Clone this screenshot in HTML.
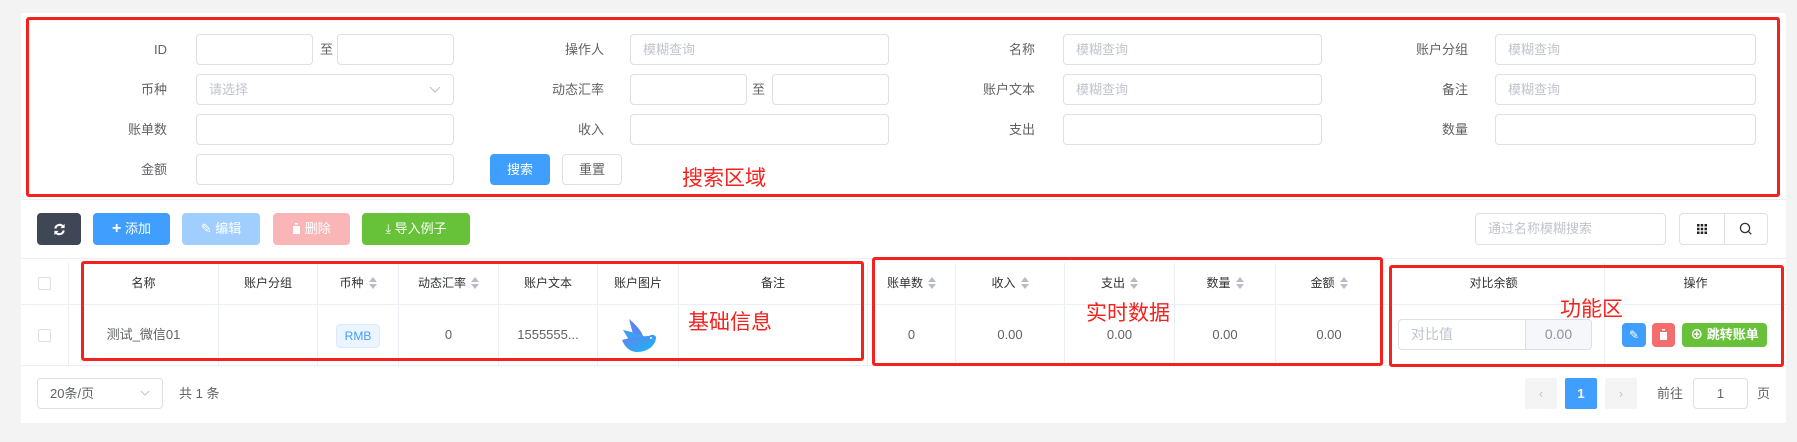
<!DOCTYPE html>
<html><head><meta charset="utf-8"><style>
*{box-sizing:border-box;margin:0;padding:0}
body{width:1797px;height:442px;background:#f3f3f3;font-family:"Liberation Sans","Noto Sans CJK SC",sans-serif;font-size:13px;color:#606266;position:relative;overflow:hidden}
.a{position:absolute}
.card{left:21px;top:13px;width:1765px;height:410px;background:#fff}
.lbl{text-align:right;height:31px;line-height:31px;width:120px;font-size:13px;color:#606266}
.inp{border:1px solid #dcdfe6;border-radius:4px;height:31px;background:#fff;color:#c0c4cc;line-height:29px;padding-left:12px;font-size:13px}
.red{border:3px solid #f5211d;border-radius:3px}
.rt{color:#f5211d;font-size:21px}
.btn{border-radius:4px;color:#fff;text-align:center;line-height:31px;font-size:13px;height:31px}
.th{top:263px;height:41px;line-height:41px;text-align:center;color:#303133;font-size:12px;border-right:1px solid #ebeef5}
.td{top:304px;height:61px;line-height:61px;text-align:center;color:#606266;font-size:13px;border-right:1px solid #ebeef5}
.s{display:inline-block;width:8px;height:12px;vertical-align:middle;margin-left:5px;position:relative;top:-1px}
.s:before{content:"";position:absolute;left:0;top:0;border:4px solid transparent;border-bottom:5px solid #b7bcc6;border-top:0}
.s:after{content:"";position:absolute;left:0;bottom:0;border:4px solid transparent;border-top:5px solid #b7bcc6;border-bottom:0}
.hl{height:1px;background:#ebeef5}
</style></head><body>
<div class="a card"></div>
<div class="a lbl" style="left:47px;top:34px">ID</div>
<div class="a inp" style="left:196px;top:34px;width:117px"></div>
<div class="a" style="left:320px;top:34px;line-height:31px">至</div>
<div class="a inp" style="left:337px;top:34px;width:117px"></div>
<div class="a lbl" style="left:484px;top:34px">操作人</div>
<div class="a inp" style="left:630px;top:34px;width:259px">模糊查询</div>
<div class="a lbl" style="left:915px;top:34px">名称</div>
<div class="a inp" style="left:1063px;top:34px;width:259px">模糊查询</div>
<div class="a lbl" style="left:1348px;top:34px">账户分组</div>
<div class="a inp" style="left:1495px;top:34px;width:261px">模糊查询</div>

<div class="a lbl" style="left:47px;top:74px">币种</div>
<div class="a inp" style="left:196px;top:74px;width:258px">请选择<svg style="position:absolute;right:12px;top:11px" width="12" height="8" viewBox="0 0 12 8"><path d="M1 1l5 5 5-5" fill="none" stroke="#c0c4cc" stroke-width="1.2"/></svg></div>
<div class="a lbl" style="left:484px;top:74px">动态汇率</div>
<div class="a inp" style="left:630px;top:74px;width:117px"></div>
<div class="a" style="left:752px;top:74px;line-height:31px">至</div>
<div class="a inp" style="left:772px;top:74px;width:117px"></div>
<div class="a lbl" style="left:915px;top:74px">账户文本</div>
<div class="a inp" style="left:1063px;top:74px;width:259px">模糊查询</div>
<div class="a lbl" style="left:1348px;top:74px">备注</div>
<div class="a inp" style="left:1495px;top:74px;width:261px">模糊查询</div>

<div class="a lbl" style="left:47px;top:114px">账单数</div>
<div class="a inp" style="left:196px;top:114px;width:258px"></div>
<div class="a lbl" style="left:484px;top:114px">收入</div>
<div class="a inp" style="left:630px;top:114px;width:259px"></div>
<div class="a lbl" style="left:915px;top:114px">支出</div>
<div class="a inp" style="left:1063px;top:114px;width:259px"></div>
<div class="a lbl" style="left:1348px;top:114px">数量</div>
<div class="a inp" style="left:1495px;top:114px;width:261px"></div>

<div class="a lbl" style="left:47px;top:154px">金额</div>
<div class="a inp" style="left:196px;top:154px;width:258px"></div>
<div class="a btn" style="left:490px;top:154px;width:60px;background:#409eff">搜索</div>
<div class="a btn" style="left:562px;top:154px;width:60px;border:1px solid #dcdfe6;color:#606266;line-height:29px">重置</div>
<div class="a rt" style="left:682px;top:162px">搜索区域</div>
<div class="a red" style="left:26px;top:17px;width:1754px;height:180px"></div>
<div class="a hl" style="left:21px;top:199px;width:1765px"></div>

<div class="a btn" style="left:37px;top:213px;width:44px;height:32px;line-height:32px;background:#3f4656"><svg width="13" height="13" viewBox="0 0 14 14" style="vertical-align:middle"><path d="M2.5 6A4.7 4.7 0 0 1 11 4M11.5 8A4.7 4.7 0 0 1 3 10" fill="none" stroke="#fff" stroke-width="2.2"/><path d="M12.5 1v4.5H8zM1.5 13V8.5H6z" fill="#fff"/></svg></div>
<div class="a btn" style="left:93px;top:213px;width:77px;height:32px;line-height:32px;background:#409eff"><b style="font-size:16px">+</b> 添加</div>
<div class="a btn" style="left:182px;top:213px;width:78px;height:32px;line-height:32px;background:#a0cfff">✎ 编辑</div>
<div class="a btn" style="left:273px;top:213px;width:77px;height:32px;line-height:32px;background:#fab6b6"><svg width="9" height="11" viewBox="0 0 9 11" style="vertical-align:-1px"><path d="M0 1.5h9M3 1.5V0h3v1.5M1 3h7v8H1z" fill="#fff"/></svg> 删除</div>
<div class="a btn" style="left:362px;top:213px;width:108px;height:32px;line-height:32px;background:#67c23a">⤓ 导入例子</div>
<div class="a inp" style="left:1475px;top:213px;width:191px;height:32px;line-height:30px">通过名称模糊搜索</div>
<div class="a" style="left:1679px;top:213px;width:89px;height:32px;border:1px solid #dcdfe6;border-radius:4px"></div>
<div class="a" style="left:1724px;top:213px;width:1px;height:32px;background:#dcdfe6"></div>
<svg class="a" style="left:1697px;top:224px" width="10" height="10" viewBox="0 0 10 10"><path d="M0 0h2.5v2.5H0zM3.7 0h2.5v2.5H3.7zM7.5 0H10v2.5H7.5zM0 3.7h2.5v2.5H0zM3.7 3.7h2.5v2.5H3.7zM7.5 3.7H10v2.5H7.5zM0 7.5h2.5V10H0zM3.7 7.5h2.5V10H3.7zM7.5 7.5H10V10H7.5z" fill="#222"/></svg>
<svg class="a" style="left:1739px;top:222px" width="14" height="14" viewBox="0 0 14 14"><circle cx="6" cy="6" r="4.6" fill="none" stroke="#333" stroke-width="1.3"/><path d="M9.3 9.3l3 3" stroke="#333" stroke-width="1.3"/></svg>
<div class="a hl" style="left:21px;top:258px;width:1765px"></div>

<div class="a hl" style="left:21px;top:304px;width:1765px"></div>
<div class="a hl" style="left:21px;top:365px;width:1765px"></div>
<div class="a th" style="left:21px;width:48px"><span style="display:inline-block;width:13px;height:13px;border:1px solid #dcdfe6;border-radius:2px;vertical-align:middle"></span></div>
<div class="a th" style="left:69px;width:150px">名称</div>
<div class="a th" style="left:219px;width:99px">账户分组</div>
<div class="a th" style="left:318px;width:81px">币种<i class="s"></i></div>
<div class="a th" style="left:399px;width:100px">动态汇率<i class="s"></i></div>
<div class="a th" style="left:499px;width:99px">账户文本</div>
<div class="a th" style="left:598px;width:81px">账户图片</div>
<div class="a th" style="left:679px;width:189px">备注</div>
<div class="a th" style="left:868px;width:88px">账单数<i class="s"></i></div>
<div class="a th" style="left:956px;width:109px">收入<i class="s"></i></div>
<div class="a th" style="left:1065px;width:110px">支出<i class="s"></i></div>
<div class="a th" style="left:1175px;width:101px">数量<i class="s"></i></div>
<div class="a th" style="left:1276px;width:107px">金额<i class="s"></i></div>
<div class="a th" style="left:1383px;width:222px">对比余额</div>
<div class="a th" style="left:1605px;width:181px;border-right:0">操作</div>

<div class="a td" style="left:21px;width:48px"><span style="display:inline-block;width:13px;height:13px;border:1px solid #dcdfe6;border-radius:2px;vertical-align:middle"></span></div>
<div class="a td" style="left:69px;width:150px">测试_微信01</div>
<div class="a td" style="left:219px;width:99px"></div>
<div class="a td" style="left:318px;width:81px"><span style="display:inline-block;background:#ecf5ff;border:1px solid #d9ecff;color:#409eff;border-radius:4px;height:24px;line-height:22px;padding:0 8px;font-size:12px;vertical-align:middle">RMB</span></div>
<div class="a td" style="left:399px;width:100px">0</div>
<div class="a td" style="left:499px;width:99px">1555555...</div>
<div class="a td" style="left:598px;width:81px"><svg width="38" height="36" viewBox="0 0 38 36" style="vertical-align:middle"><defs><linearGradient id="g" x1="0" y1="0" x2="1" y2="1"><stop offset="0" stop-color="#6a7ff0"/><stop offset="1" stop-color="#12b8f5"/></linearGradient></defs><path d="M10 1C16 6 22 12 24 18L14 16Z" fill="#5b86ef"/><path d="M4 12C12 14 22 16 28 20L10 22Z" fill="#3d9ef2"/><path d="M3 22C10 20 24 18 30 18C33 16 36 17 37 19C37 28 28 34 18 34C12 34 6 30 3 22Z" fill="url(#g)"/><circle cx="32" cy="20" r="1" fill="#fff"/></svg></div>
<div class="a td" style="left:679px;width:189px"></div>
<div class="a td" style="left:868px;width:88px">0</div>
<div class="a td" style="left:956px;width:109px">0.00</div>
<div class="a td" style="left:1065px;width:110px">0.00</div>
<div class="a td" style="left:1175px;width:101px">0.00</div>
<div class="a td" style="left:1276px;width:107px">0.00</div>
<div class="a td" style="left:1383px;width:222px"></div>
<div class="a td" style="left:1605px;width:181px;border-right:0"></div>
<div class="a inp" style="left:1398px;top:319px;width:194px;height:31px;font-size:14px">对比值</div>
<div class="a" style="left:1525px;top:320px;width:66px;height:29px;background:#f5f7fa;border-left:1px solid #dcdfe6;color:#909399;text-align:center;line-height:29px;font-size:14px;border-radius:0 3px 3px 0">0.00</div>
<div class="a btn" style="left:1622px;top:323px;width:24px;height:24px;line-height:24px;background:#409eff;font-size:12px">✎</div>
<div class="a btn" style="left:1652px;top:323px;width:23px;height:24px;line-height:24px;background:#f56c6c"><svg width="9" height="11" viewBox="0 0 9 11" style="vertical-align:-1px"><path d="M0 1.5h9M3 1.5V0h3v1.5M1 3h7v8H1z" fill="#fff"/></svg></div>
<div class="a btn" style="left:1682px;top:323px;width:85px;height:24px;line-height:24px;background:#67c23a;font-weight:bold">⊕ 跳转账单</div>

<div class="a red" style="left:81px;top:261px;width:783px;height:100px"></div>
<div class="a red" style="left:872px;top:257px;width:511px;height:109px"></div>
<div class="a red" style="left:1389px;top:265px;width:395px;height:102px"></div>
<div class="a rt" style="left:688px;top:306px">基础信息</div>
<div class="a rt" style="left:1086px;top:297px">实时数据</div>
<div class="a rt" style="left:1560px;top:293px">功能区</div>

<div class="a inp" style="left:37px;top:378px;width:126px;height:31px;color:#606266">20条/页<svg style="position:absolute;right:12px;top:11px" width="10" height="7" viewBox="0 0 12 8"><path d="M1 1l5 5 5-5" fill="none" stroke="#c0c4cc" stroke-width="1.2"/></svg></div>
<div class="a" style="left:179px;top:378px;line-height:31px">共 1 条</div>
<div class="a" style="left:1525px;top:378px;width:32px;height:31px;background:#f4f4f5;color:#c0c4cc;text-align:center;line-height:31px;border-radius:2px">‹</div>
<div class="a" style="left:1565px;top:378px;width:32px;height:31px;background:#409eff;color:#fff;text-align:center;line-height:31px;border-radius:2px;font-weight:bold">1</div>
<div class="a" style="left:1605px;top:378px;width:32px;height:31px;background:#f4f4f5;color:#c0c4cc;text-align:center;line-height:31px;border-radius:2px">›</div>
<div class="a" style="left:1657px;top:378px;line-height:31px">前往</div>
<div class="a inp" style="left:1693px;top:378px;width:55px;color:#606266;text-align:center;padding:0">1</div>
<div class="a" style="left:1757px;top:378px;line-height:31px">页</div>
</body></html>
